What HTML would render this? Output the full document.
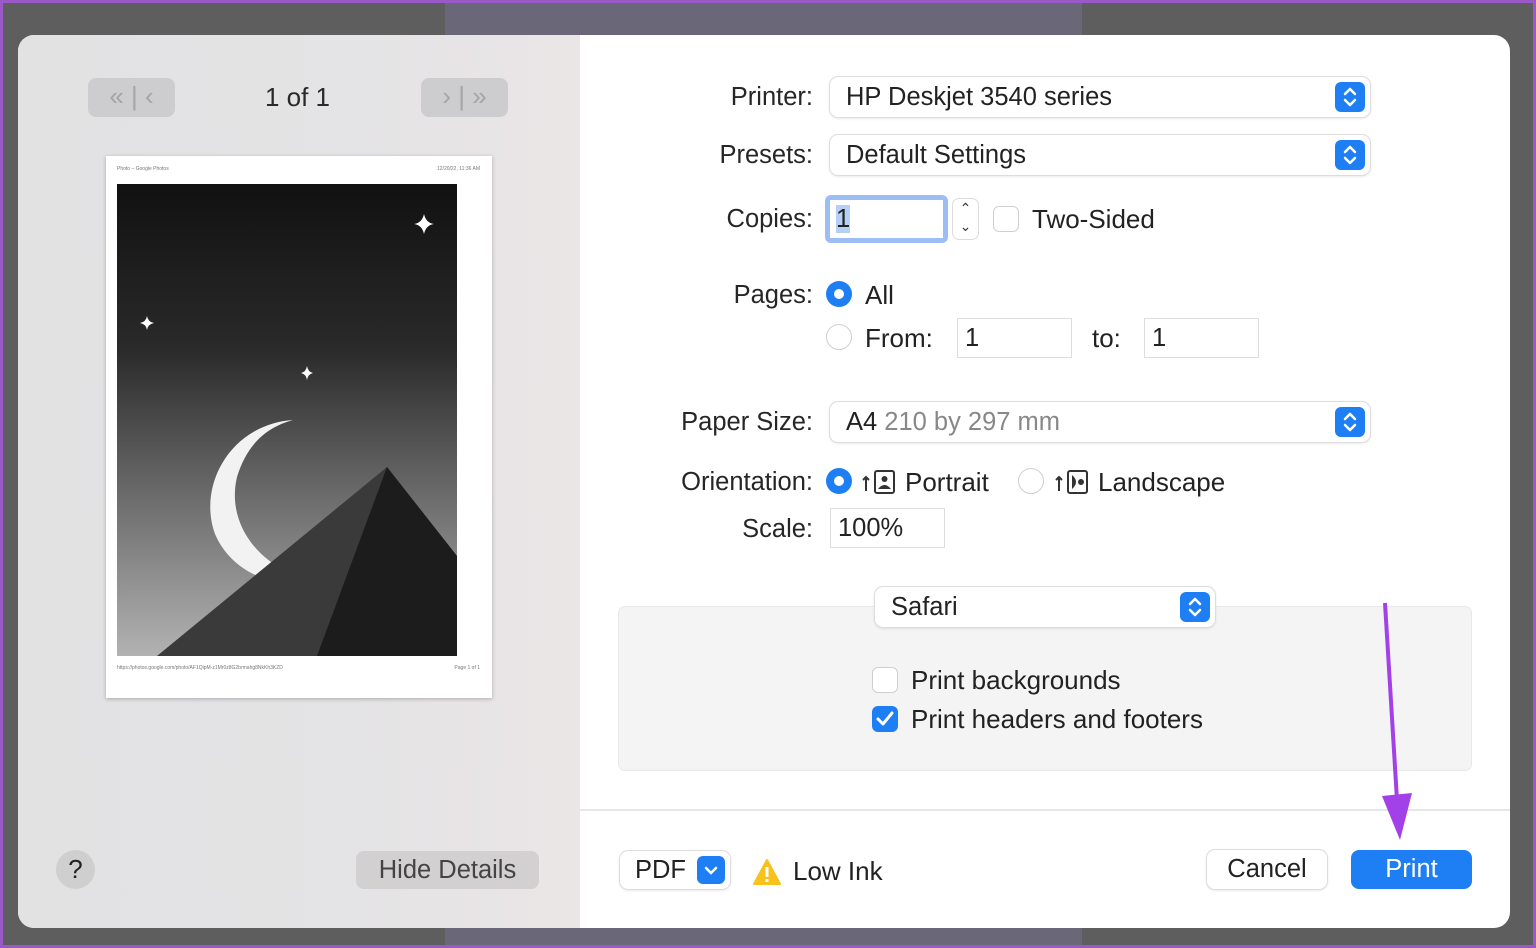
<!DOCTYPE html><html><head><style>
*{margin:0;padding:0;box-sizing:border-box}
body{width:1536px;height:948px;overflow:hidden;position:relative;background:#5e5e5e;font-family:"Liberation Sans",sans-serif;color:#222}
.a{position:absolute}
.lbl{position:absolute;font-size:25.5px;color:#262626;text-align:right;width:200px}
.pop{position:absolute;background:#fff;border-radius:8px;box-shadow:0 0 0 1px #ddd,0 1px 3px rgba(0,0,0,.15);font-size:25.5px;padding-left:16px;line-height:40px}
.chev{position:absolute;right:5px;top:5px;width:30px;height:30px;background:#1e7ff5;border-radius:6px}
.rad{position:absolute;width:26px;height:26px;border-radius:50%;border:1px solid #cfcfcf;background:#fff}
.rad.on{background:#1e7ff5;border:none}
.rad.on::after{content:"";position:absolute;left:8px;top:8px;width:10px;height:10px;border-radius:50%;background:#fff}
.fld{position:absolute;background:#fff;box-shadow:0 0 0 1px #ddd;font-size:25.5px;line-height:38px;padding-left:7px}
.cb{position:absolute;width:26px;height:26px;border:1px solid #cfcfcf;border-radius:6px;background:#fff}
.t{position:absolute;font-size:26px}
</style></head><body>
<div class="a" style="left:0;top:0;width:1536px;height:948px;border:3px solid #9b59c8;z-index:5;pointer-events:none"></div>
<div class="a" style="left:445px;top:0;width:637px;height:948px;background:#6a6878"></div>
<div class="a" style="left:18px;top:35px;width:1492px;height:893px;border-radius:16px;overflow:hidden;background:#fff">
 <div class="a" style="left:0;top:0;width:562px;height:893px;background:linear-gradient(90deg,#e2e2e3 0%,#e4e3e5 60%,#ebe6e6 100%)"></div>
</div>
<div class="a" style="left:88px;top:78px;width:87px;height:39px;background:#cdcdcf;border-radius:8px;color:#a5a5a7;font-size:26px;line-height:37px;text-align:center">«&nbsp;|&nbsp;‹</div>
<div class="a" style="left:421px;top:78px;width:87px;height:39px;background:#cdcdcf;border-radius:8px;color:#a5a5a7;font-size:26px;line-height:37px;text-align:center">›&nbsp;|&nbsp;»</div>
<div class="a" style="left:240px;top:82px;width:115px;text-align:center;font-size:26px;color:#2a2a2a">1 of 1</div>
<div class="a" style="left:106px;top:156px;width:386px;height:542px;background:#fff;box-shadow:0 1px 4px rgba(0,0,0,.25)">
 <div class="a" style="left:11px;top:10px;font-size:5px;color:#777">Photo – Google Photos</div>
 <div class="a" style="right:12px;top:10px;font-size:5px;color:#777">12/20/22, 11:36 AM</div>
 <div class="a" style="left:11px;top:509px;font-size:5px;color:#777">https://photos.google.com/photo/AF1QipM-z1Mr0z8G2brmahg8NkKh3KZD</div>
 <div class="a" style="right:12px;top:509px;font-size:5px;color:#777">Page 1 of 1</div>
 <svg class="a" style="left:11px;top:28px" width="340" height="472" viewBox="0 0 340 472">
  <defs><linearGradient id="g" x1="0" y1="0" x2="0" y2="1"><stop offset="0" stop-color="#111"/><stop offset=".35" stop-color="#2a2a2a"/><stop offset="1" stop-color="#b2b2b2"/></linearGradient></defs>
  <rect width="340" height="472" fill="url(#g)"/>
  <path d="M176 236 C115 240 80 300 98 350 C115 390 160 405 195 398 C135 380 110 335 120 293 C130 260 150 243 176 236Z" fill="#f2f2f2"/>
  <path d="M40 472 L270 283 L340 372 L340 472Z" fill="#3a3a3a"/>
  <path d="M200 472 L270 283 L340 372 L340 472Z" fill="#1c1c1c"/>
  <path d="M307 30 q2 9 10 10 q-8 1 -10 10 q-2 -9 -10 -10 q8 -1 10 -10Z" fill="#fff"/>
  <path d="M30 132 q1 6 7 7 q-6 1 -7 7 q-1 -6 -7 -7 q6 -1 7 -7Z" fill="#fff"/>
  <path d="M190 182 q1 6 6 7 q-5 1 -6 7 q-1 -6 -6 -7 q5 -1 6 -7Z" fill="#fff"/>
 </svg>
</div>
<div class="a" style="left:56px;top:850px;width:39px;height:39px;border-radius:50%;background:#cfcfd0;font-size:26px;text-align:center;line-height:39px;color:#222">?</div>
<div class="a" style="left:356px;top:851px;width:183px;height:38px;border-radius:8px;background:#d2d0d0;font-size:25.5px;text-align:center;line-height:38px;color:#444">Hide Details</div>

<div class="lbl" style="left:613px;top:83px">Printer:</div>
<div class="pop" style="left:830px;top:77px;width:540px;height:40px">HP Deskjet 3540 series<div class="chev"><svg width="30" height="30"><path d="M10 12l5-5 5 5M10 18l5 5 5-5" stroke="#fff" stroke-width="2.5" fill="none" stroke-linecap="round" stroke-linejoin="round"/></svg></div></div>
<div class="lbl" style="left:613px;top:141px">Presets:</div>
<div class="pop" style="left:830px;top:135px;width:540px;height:40px">Default Settings<div class="chev"><svg width="30" height="30"><path d="M10 12l5-5 5 5M10 18l5 5 5-5" stroke="#fff" stroke-width="2.5" fill="none" stroke-linecap="round" stroke-linejoin="round"/></svg></div></div>
<div class="lbl" style="left:613px;top:205px">Copies:</div>
<div class="a" style="left:825px;top:195px;width:123px;height:48px;border-radius:6px;background:#9dbdf5"></div>
<div class="a" style="left:830px;top:200px;width:113px;height:38px;background:#fff;font-size:25.5px;line-height:38px;padding-left:6px"><span style="background:#b6cff5">1</span></div>
<div class="a" style="left:953px;top:199px;width:25px;height:40px;border-radius:6px;box-shadow:0 0 0 1px #ddd;background:#fff;font-size:14px;text-align:center;line-height:18px;color:#333">⌃<br>⌄</div>
<div class="cb" style="left:993px;top:206px"></div>
<div class="t" style="left:1032px;top:204px">Two-Sided</div>
<div class="lbl" style="left:613px;top:281px">Pages:</div>
<div class="rad on" style="left:826px;top:281px"></div>
<div class="t" style="left:865px;top:280px">All</div>
<div class="rad" style="left:826px;top:324px"></div>
<div class="t" style="left:865px;top:323px">From:</div>
<div class="fld" style="left:958px;top:319px;width:113px;height:38px">1</div>
<div class="t" style="left:1092px;top:323px">to:</div>
<div class="fld" style="left:1145px;top:319px;width:113px;height:38px">1</div>
<div class="lbl" style="left:613px;top:408px">Paper Size:</div>
<div class="pop" style="left:830px;top:402px;width:540px;height:40px">A4 <span style="color:#888">210 by 297 mm</span><div class="chev"><svg width="30" height="30"><path d="M10 12l5-5 5 5M10 18l5 5 5-5" stroke="#fff" stroke-width="2.5" fill="none" stroke-linecap="round" stroke-linejoin="round"/></svg></div></div>
<div class="lbl" style="left:613px;top:468px">Orientation:</div>
<div class="rad on" style="left:826px;top:468px"></div>
<svg class="a" style="left:862px;top:469px" width="34" height="26"><path d="M4 22V8M1 11l3-3 3 3" stroke="#333" stroke-width="2" fill="none"/><rect x="13" y="2" width="19" height="22" rx="2" fill="none" stroke="#333" stroke-width="2"/><circle cx="22.5" cy="10" r="3" fill="#333"/><path d="M16 20q6.5-8 13 0Z" fill="#333"/></svg>
<div class="t" style="left:905px;top:467px">Portrait</div>
<div class="rad" style="left:1018px;top:468px"></div>
<svg class="a" style="left:1055px;top:469px" width="34" height="26"><path d="M4 22V8M1 11l3-3 3 3" stroke="#333" stroke-width="2" fill="none"/><rect x="13" y="2" width="19" height="22" rx="2" fill="none" stroke="#333" stroke-width="2"/><circle cx="26" cy="13" r="3" fill="#333"/><path d="M17 6q8 7 0 14Z" fill="#333"/></svg>
<div class="t" style="left:1098px;top:467px">Landscape</div>
<div class="lbl" style="left:613px;top:515px">Scale:</div>
<div class="fld" style="left:831px;top:509px;width:113px;height:38px">100%</div>
<div class="a" style="left:619px;top:607px;width:852px;height:163px;background:#f4f4f4;border-radius:6px;box-shadow:0 0 0 1px #e8e8e8"></div>
<div class="pop" style="left:875px;top:587px;width:340px;height:40px">Safari<div class="chev"><svg width="30" height="30"><path d="M10 12l5-5 5 5M10 18l5 5 5-5" stroke="#fff" stroke-width="2.5" fill="none" stroke-linecap="round" stroke-linejoin="round"/></svg></div></div>
<div class="cb" style="left:872px;top:667px"></div>
<div class="t" style="left:911px;top:665px">Print backgrounds</div>
<div class="cb" style="left:872px;top:706px;background:#1e7ff5;border:none"><svg width="26" height="26"><path d="M6 13l5 5 9-11" stroke="#fff" stroke-width="3" fill="none" stroke-linecap="round" stroke-linejoin="round"/></svg></div>
<div class="t" style="left:911px;top:704px">Print headers and footers</div>
<div class="a" style="left:580px;top:809px;width:930px;height:2px;background:#e6e6e6"></div>
<div class="pop" style="left:620px;top:851px;width:110px;height:38px;line-height:38px;padding-left:15px">PDF<div class="chev" style="top:5px;width:28px;height:28px"><svg width="28" height="28"><path d="M9 12l5 5 5-5" stroke="#fff" stroke-width="2.5" fill="none" stroke-linecap="round"/></svg></div></div>
<svg class="a" style="left:753px;top:858px" width="28" height="28"><path d="M14 2L27 26H1Z" fill="#f6c21b" stroke="#f6c21b" stroke-linejoin="round" stroke-width="2"/><rect x="12.5" y="9" width="3" height="10" fill="#fff"/><rect x="12.5" y="21" width="3" height="3" fill="#fff"/></svg>
<div class="t" style="left:793px;top:856px">Low Ink</div>
<div class="pop" style="left:1207px;top:850px;width:120px;height:39px;padding:0;text-align:center;line-height:39px">Cancel</div>
<div class="a" style="left:1351px;top:850px;width:121px;height:39px;border-radius:8px;background:#1e7ff5;color:#fff;font-size:25.5px;text-align:center;line-height:39px">Print</div>
<svg class="a" style="left:1370px;top:600px;z-index:6" width="60" height="245"><path d="M15 3L27 200" stroke="#a241e8" stroke-width="4" fill="none"/><path d="M12 196L30 240L42 193Z" fill="#a241e8"/></svg>
</body></html>
